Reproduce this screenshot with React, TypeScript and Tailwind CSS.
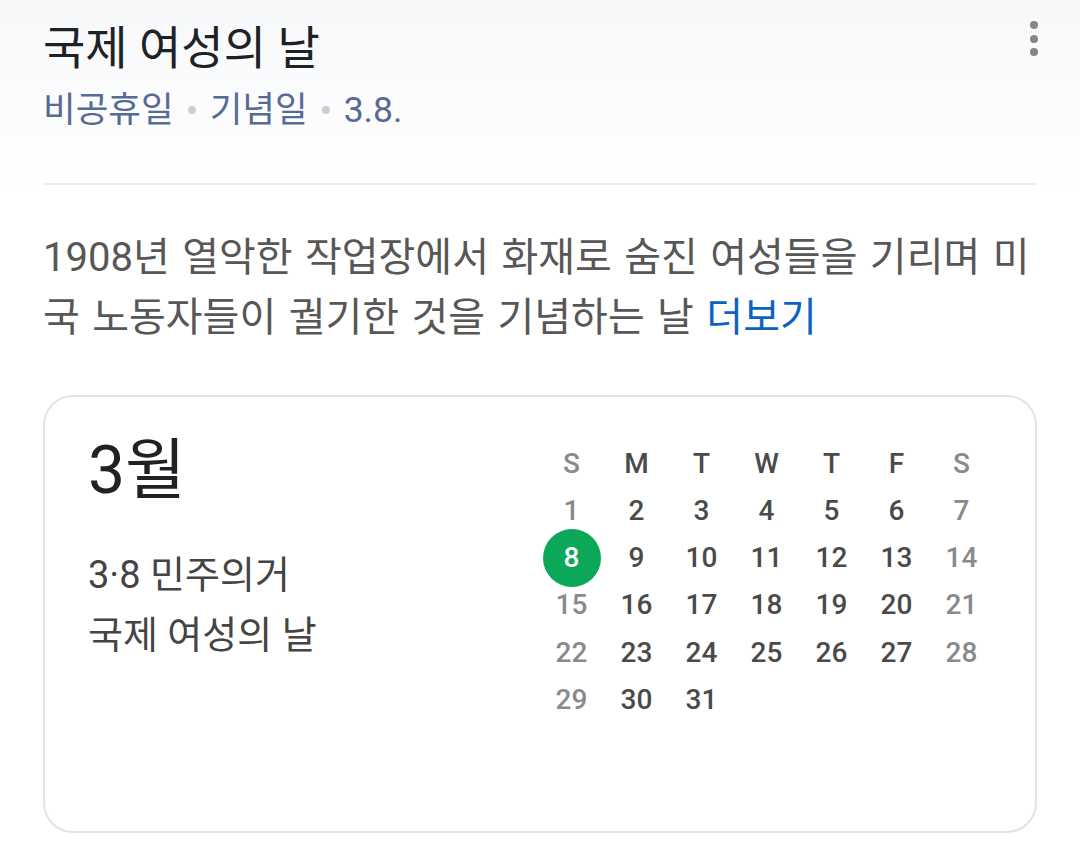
const weekdays = ["S", "M", "T", "W", "T", "F", "S"];

// March: starts on Sunday, 31 days
const days: (number | null)[] = Array.from({ length: 35 }, (_, i) => (i < 31 ? i + 1 : null));

const App = () => {
  return (
    <div
      className="w-[1080px] h-[854px] bg-white overflow-hidden"
      style={{ fontFamily: 'Roboto, "Noto Sans CJK KR", sans-serif' }}
    >
      {/* Header */}
      <div className="bg-gradient-to-b from-[#f7f8fa] to-white px-[43px] pt-[20px]">
        <div className="flex items-start justify-between">
          <div>
            <h1 className="text-[46px] leading-[56px] text-[#202124]">국제 여성의 날</h1>
            <div className="mt-[12px] flex items-center text-[35.5px] leading-[44px] text-[#566a94]">
              <span>비공휴일</span>
              <span className="mx-[14px] w-[8px] h-[8px] rounded-full bg-[#c9ced9]" />
              <span>기념일</span>
              <span className="mx-[14px] w-[8px] h-[8px] rounded-full bg-[#c9ced9]" />
              <span>3.8.</span>
            </div>
          </div>
          <button className="flex flex-col items-center gap-[5.5px] pt-[1px] mr-[-1px]">
            <span className="w-[8px] h-[8px] rounded-full bg-[#868686]" />
            <span className="w-[8px] h-[8px] rounded-full bg-[#868686]" />
            <span className="w-[8px] h-[8px] rounded-full bg-[#868686]" />
          </button>
        </div>
        <div className="mt-[51px] h-[2px] bg-[#ececec]" />
      </div>

      <div className="px-[43px]">
        {/* Description */}
        <p className="mt-[43px] text-[40px] leading-[60px] [word-spacing:2.5px] text-[#575757]">
          1908년 열악한 작업장에서 화재로 숨진 여성들을 기리며 미국 노동자들이 궐기한 것을 기념하는 날{" "}
          <span className="text-[#0b63c1]">더보기</span>
        </p>

        {/* Calendar card */}
        <div className="mt-[47px] h-[438px] rounded-[30px] border-2 border-[#e3e3e3] flex pl-[43px] pr-[41px] pt-[34px]">
          <div className="flex-1">
            <div className="text-[66px] leading-[80px] text-[#202124]">3월</div>
            <div className="mt-[34px] text-[38px] leading-[60px] text-[#444]">
              3·8 민주의거
              <br />
              국제 여성의 날
            </div>
          </div>
          <div className="pt-[9px]">
            <div className="grid grid-cols-7 w-[455px]">
              {weekdays.map((d, i) => (
                <div
                  key={"w" + i}
                  className={
                    "h-[47px] flex items-center justify-center text-[28px] font-medium " +
                    (i === 0 || i === 6 ? "text-[#8a8a8a]" : "text-[#4a4a4a]")
                  }
                >
                  {d}
                </div>
              ))}
              {days.map((d, i) => {
                const weekend = i % 7 === 0 || i % 7 === 6;
                return (
                  <div key={i} className="h-[47.4px] flex items-center justify-center">
                    {d === 8 ? (
                      <span className="w-[58px] h-[58px] rounded-full bg-[#0aa858] flex items-center justify-center text-[28px] font-medium text-white">
                        8
                      </span>
                    ) : (
                      <span
                        className={
                          "text-[28px] font-medium " + (weekend ? "text-[#8a8a8a]" : "text-[#4a4a4a]")
                        }
                      >
                        {d}
                      </span>
                    )}
                  </div>
                );
              })}
            </div>
          </div>
        </div>
      </div>
    </div>
  );
};

export default App;
